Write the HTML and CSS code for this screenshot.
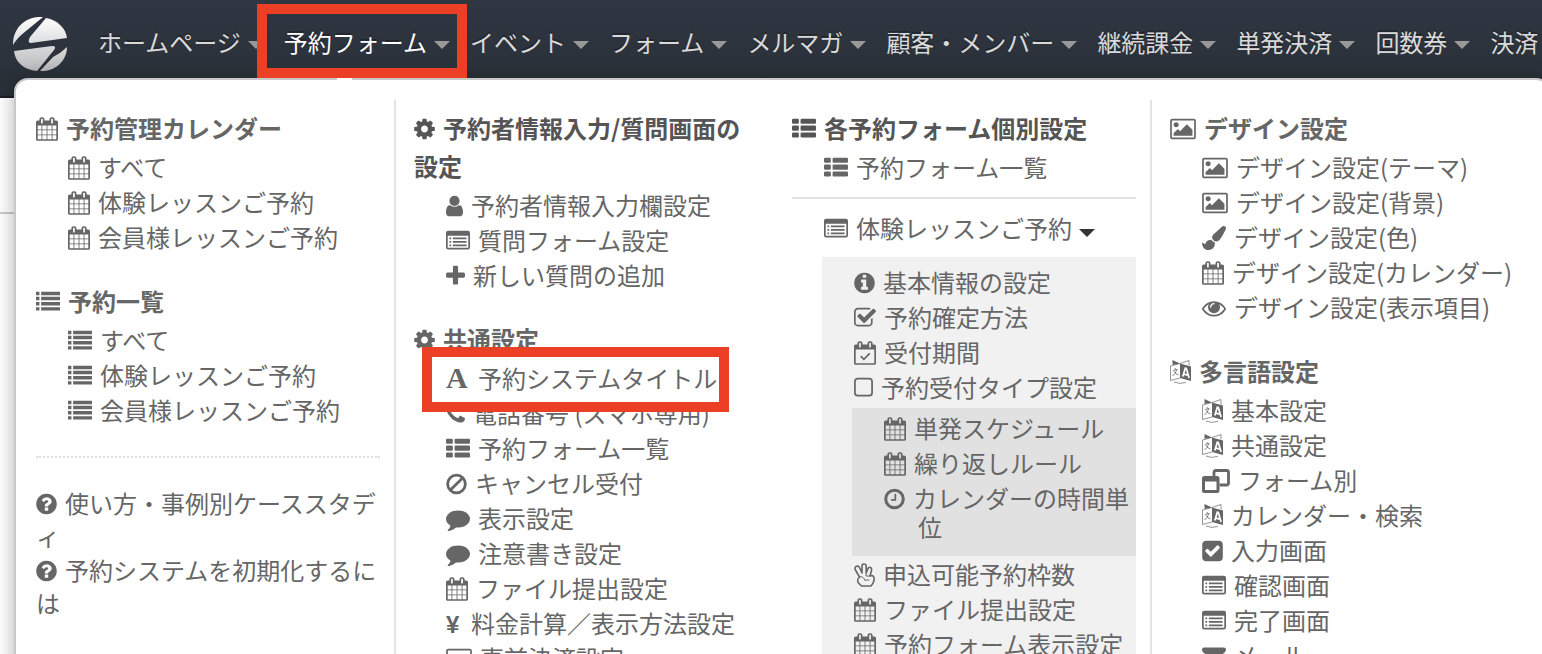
FILE: index.html
```html
<!DOCTYPE html>
<html lang="ja">
<head>
    <meta charset="UTF-8">
    <meta name="viewport" content="width=device-width, initial-scale=1.0">
    <title>予約フォーム</title>
    <link rel="stylesheet" href="styles.css">
</head>
<body>
    <svg class="sprite" aria-hidden="true">
        <symbol id="calendar" viewBox="64 0 1664 1792"><path d="M192 1664h288v-288h-288v288zm352 0h320v-288h-320v288zm-352-352h288v-320h-288v320zm352 0h320v-320h-320v320zm-352-384h288v-288h-288v288zm736 736h320v-288h-320v288zm-384-736h320v-288h-320v288zm768 736h288v-288h-288v288zm-384-352h320v-320h-320v320zm-352-864v-288q0-13-9.5-22.5t-22.5-9.5h-64q-13 0-22.5 9.5t-9.5 22.5v288q0 13 9.5 22.5t22.5 9.5h64q13 0 22.5-9.5t9.5-22.5zm736 864h288v-320h-288v320zm-384-384h320v-288h-320v288zm384 0h288v-288h-288v288zm32-480v-288q0-13-9.5-22.5t-22.5-9.5h-64q-13 0-22.5 9.5t-9.5 22.5v288q0 13 9.5 22.5t22.5 9.5h64q13 0 22.5-9.5t9.5-22.5zm384-64v1280q0 52-38 90t-90 38h-1408q-52 0-90-38t-38-90v-1280q0-52 38-90t90-38h128v-96q0-66 47-113t113-47h64q66 0 113 47t47 113v96h384v-96q0-66 47-113t113-47h64q66 0 113 47t47 113v96h128q52 0 90 38t38 90z"/></symbol>
        <symbol id="calendar-check" viewBox="64 0 1664 1792"><path d="M192 1664h1408v-1024h-1408v1024zm384-1216v-288q0-32-32-32h-64q-32 0-32 32v288q0 32 32 32h64q32 0 32-32zm768 0v-288q0-32-32-32h-64q-32 0-32 32v288q0 32 32 32h64q32 0 32-32zm384-64v1280q0 52-38 90t-90 38h-1408q-52 0-90-38t-38-90v-1280q0-52 38-90t90-38h128v-96q0-66 47-113t113-47h64q66 0 113 47t47 113v96h384v-96q0-66 47-113t113-47h64q66 0 113 47t47 113v96h128q52 0 90 38t38 90z"/><path d="M570 1130l240 240 440-440" fill="none" stroke="currentColor" stroke-width="128"/></symbol>
        <symbol id="list" viewBox="0 0 1792 1792"><path d="M0 128h256v256H0zM384 128h1408v256H384zM0 512h256v256H0zM384 512h1408v256H384zM0 896h256v256H0zM384 896h1408v256H384zM0 1280h256v256H0zM384 1280h1408v256H384z"/></symbol>
        <symbol id="th-list" viewBox="0 0 1792 1792"><rect y="128" width="512" height="384" rx="96"/><rect x="640" y="128" width="1152" height="384" rx="96"/><rect y="640" width="512" height="384" rx="96"/><rect x="640" y="640" width="1152" height="384" rx="96"/><rect y="1152" width="512" height="384" rx="96"/><rect x="640" y="1152" width="1152" height="384" rx="96"/></symbol>
        <symbol id="list-alt" viewBox="0 0 1792 1792"><path fill-rule="evenodd" d="M160 128h1472q160 0 160 160v1088q0 160-160 160h-1472q-160 0-160-160v-1088q0-160 160-160zM128 512v864q0 32 32 32h1472q32 0 32-32v-864z"/><path d="M256 640h128v128H256zM512 640h1024v128H512zM256 896h128v128H256zM512 896h1024v128H512zM256 1152h128v128H256zM512 1152h1024v128H512z"/></symbol>
        <symbol id="question" viewBox="128 0 1536 1792"><path d="M1024 1376v-192q0-14-9-23t-23-9h-192q-14 0-23 9t-9 23v192q0 14 9 23t23 9h192q14 0 23-9t9-23zm256-672q0-88-55.5-163t-138.5-116-170-41q-243 0-371 213-15 24 8 42l132 100q7 6 19 6 16 0 25-12 53-68 86-92 34-24 86-24 48 0 85.5 26t37.5 59q0 38-20 61t-68 45q-63 28-115.5 86.5t-52.5 125.5v36q0 14 9 23t23 9h192q14 0 23-9t9-23q0-19 21.5-49.5t54.5-49.5q32-18 49-28.5t46-35 44.5-48 28-60.5 12.5-81zm384 192q0 209-103 385.5t-279.5 279.5-385.5 103-385.5-103-279.5-279.5-103-385.5 103-385.5 279.5-279.5 385.5-103 385.5 103 279.5 279.5 103 385.5z"/></symbol>
        <symbol id="info" viewBox="128 0 1536 1792"><path d="M1152 1376v-160q0-14-9-23t-23-9h-96v-512q0-14-9-23t-23-9h-320q-14 0-23 9t-9 23v160q0 14 9 23t23 9h96v320h-96q-14 0-23 9t-9 23v160q0 14 9 23t23 9h448q14 0 23-9t9-23zm-128-896v-160q0-14-9-23t-23-9h-192q-14 0-23 9t-9 23v160q0 14 9 23t23 9h192q14 0 23-9t9-23zm640 416q0 209-103 385.5t-279.5 279.5-385.5 103-385.5-103-279.5-279.5-103-385.5 103-385.5 279.5-279.5 385.5-103 385.5 103 279.5 279.5 103 385.5z"/></symbol>
        <symbol id="cog" viewBox="128 0 1536 1792"><path d="M1152 896q0-106-75-181t-181-75-181 75-75 181 75 181 181 75 181-75 75-181zm512-109v222q0 12-8 23t-20 13l-185 28q-19 54-39 91 35 50 107 138 10 12 10 25t-9 23q-27 37-99 108t-94 71q-12 0-26-9l-138-108q-44 23-91 38-16 136-29 186-7 28-36 28h-222q-14 0-24.5-8.5t-11.5-21.5l-28-184q-49-16-90-37l-141 107q-10 9-25 9-14 0-25-11-126-114-165-168-7-10-7-23 0-12 8-23 15-21 51-66.5t54-70.5q-27-50-41-99l-183-27q-13-2-21-12.5t-8-23.5v-222q0-12 8-23t19-13l186-28q14-46 39-92-40-57-107-138-10-12-10-24 0-10 9-23 26-36 98.5-107.5t94.5-71.5q13 0 26 10l138 107q44-23 91-38 16-136 29-186 7-28 36-28h222q14 0 24.5 8.5t11.5 21.5l28 184q49 16 90 37l142-107q9-9 24-9 13 0 25 10 129 119 165 170 7 8 7 22 0 12-8 23-15 21-51 66.5t-54 70.5q26 50 41 98l183 28q13 2 21 12.5t8 23.5z"/></symbol>
        <symbol id="user" viewBox="256 0 1280 1792"><path d="M1536 1399q0 109-62.5 187t-150.5 78h-854q-88 0-150.5-78t-62.5-187q0-85 8.5-160.5t31.5-152 58.5-131 94-89 134.5-34.5q131 128 313 128t313-128q76 0 134.5 34.5t94 89 58.5 131 31.5 152 8.5 160.5zm-256-887q0 159-112.5 271.5t-271.5 112.5-271.5-112.5-112.5-271.5 112.5-271.5 271.5-112.5 271.5 112.5 112.5 271.5z"/></symbol>
        <symbol id="plus" viewBox="192 0 1408 1792"><path d="M1600 736v192q0 40-28 68t-68 28h-416v416q0 40-28 68t-68 28h-192q-40 0-68-28t-28-68v-416h-416q-40 0-68-28t-28-68v-192q0-40 28-68t68-28h416v-416q0-40 28-68t68-28h192q40 0 68 28t28 68v416h416q40 0 68 28t28 68z"/></symbol>
        <symbol id="phone" viewBox="192 0 1408 1792"><path d="M1600 1240q0 27-10 70.5t-21 68.5q-21 50-122 106-94 51-186 51-27 0-52.5-3.5t-57.5-12.5-47.5-14.5-55.5-20.5-49-18q-98-35-175-83-128-79-264.5-215.5t-215.5-264.5q-48-77-83-175-3-9-18-49t-20.5-55.5-14.5-47.5-12.5-57.5-3.5-52.5q0-92 51-186 56-101 106-122 25-11 68.5-21t70.5-10q14 0 21 3 18 6 53 76 11 19 30 54t35 63.5 31 53.5q3 4 17.5 25t21.5 35.5 7 28.5q0 20-28.5 50t-62 55-62 53-28.5 46q0 9 5 22.5t8.5 20.5 14 24 11.5 19q76 137 174 235t235 174q2 1 19 11.5t24 14 20.5 8.5 22.5 5q18 0 46-28.5t53-62 55-62 50-28.5q14 0 28.5 7t35.5 21.5 25 17.5q25 15 53.5 31t63.5 35 54 30q70 35 76 53 3 7 3 21z"/></symbol>
        <symbol id="ban" viewBox="128 0 1536 1792"><g fill="none" stroke="currentColor" stroke-width="210"><circle cx="896" cy="896" r="660"/><path d="M440 1352l912-912"/></g></symbol>
        <symbol id="comment" viewBox="0 0 1792 1792"><path d="M1792 896q0 174-120 321.5t-326 233-450 85.5q-70 0-145-8-198 175-460 242-49 14-114 22-17 2-30.5-9t-17.5-29v-1q-3-4-.5-12t2-10 4.5-9.5l6-9 7-8.5 8-9q7-8 31-34.5t34.5-38 31-39.5 32.5-51 27-59 26-76q-157-89-247.5-220t-90.5-281q0-130 71-248.5t191-204.5 286-136.5 348-50.5q244 0 450 85.5t326 233 120 321.5z"/></symbol>
        <symbol id="card" viewBox="0 0 1920 1792"><path fill-rule="evenodd" d="M160 128h1600q160 0 160 160v1216q0 160-160 160h-1600q-160 0-160-160v-1216q0-160 160-160zM128 256v384h1664v-384zM128 896v640h1664v-640z"/></symbol>
        <symbol id="check-square-o" viewBox="64 0 1664 1792"><path d="M1472 930v318q0 119-84.5 203.5t-203.5 84.5h-832q-119 0-203.5-84.5t-84.5-203.5v-832q0-119 84.5-203.5t203.5-84.5h832q63 0 117 25 15 7 18 23 3 17-9 29l-49 49q-10 10-23 10-3 0-9-2-23-6-45-6h-832q-66 0-113 47t-47 113v832q0 66 47 113t113 47h832q66 0 113-47t47-113v-254q0-13 9-22l64-64q10-10 23-10 6 0 12 3 20 8 20 29zm231-489l-814 814q-24 24-57 24t-57-24l-430-430q-24-24-24-57t24-57l110-110q24-24 57-24t57 24l263 263 647-647q24-24 57-24t57 24l110 110q24 24 24 57t-24 57z"/></symbol>
        <symbol id="check-square" viewBox="128 0 1536 1792"><path d="M813 1299l614-614q19-19 19-45t-19-45l-102-102q-19-19-45-19t-45 19l-467 467-211-211q-19-19-45-19t-45 19l-102 102q-19 19-19 45t19 45l358 358q19 19 45 19t45-19zm851-883v960q0 119-84.5 203.5t-203.5 84.5h-960q-119 0-203.5-84.5t-84.5-203.5v-960q0-119 84.5-203.5t203.5-84.5h960q119 0 203.5 84.5t84.5 203.5z"/></symbol>
        <symbol id="square-o" viewBox="192 0 1408 1792"><rect x="256" y="192" width="1280" height="1280" rx="224" fill="none" stroke="currentColor" stroke-width="128"/></symbol>
        <symbol id="clock" viewBox="128 0 1536 1792"><circle cx="896" cy="896" r="656" fill="none" stroke="currentColor" stroke-width="224"/><path d="M1024 544v448q0 14-9 23t-23 9h-320q-14 0-23-9t-9-23v-64q0-14 9-23t23-9h224v-352q0-14 9-23t23-9h64q14 0 23 9t9 23z"/></symbol>
        <symbol id="peace" viewBox="0 0 21 24"><g fill="none" stroke="currentColor" stroke-width="1.6" stroke-linejoin="round" stroke-linecap="round"><path d="M5.500 14L1.200 6.500Q.5 4 2.500 3.300T5.500 4.500L8 10V3Q8 1 10 1t2.200 2v7L14 5.500Q15 3.700 16.500 4.500t1 3L16 13q3-1 3.800 1t-.3 5q-.5 2-2.500 4H7.500L4 19.500q-1-3.500 1.500-5.500z"/><path d="M5.500 14q2-1 3.500.5t2 3q2-1 4-.5M12 10v3l4 0" stroke-width="1"/></g></symbol>
        <symbol id="image" viewBox="-64 0 1920 1792"><path d="M576 576q0 80-56 136t-136 56-136-56-56-136 56-136 136-56 136 56 56 136zm1024 384v448h-1408v-192l320-320 160 160 512-512zm96-704h-1600q-13 0-22.5 9.5t-9.5 22.5v1216q0 13 9.5 22.5t22.5 9.5h1600q13 0 22.5-9.5t9.5-22.5v-1216q0-13-9.5-22.5t-22.5-9.5zm160 32v1216q0 66-47 113t-113 47h-1600q-66 0-113-47t-47-113v-1216q0-66 47-113t113-47h1600q66 0 113 47t47 113z"/></symbol>
        <symbol id="brush" viewBox="0 0 1792 1792"><path d="M1615 0q70 0 122.5 46.5t52.5 116.5q0 63-45 151-332 629-465 752-97 91-218 91-126 0-216.5-92.5t-90.5-219.5q0-128 92-212l638-579q59-54 130-54zm-909 1034q39 76 106.5 130t150.500 76l1 71q4 213-129.5 347t-348.5 134q-123 0-218-46.5t-152.5-127.5-86.5-183-29-220q7 5 41 30t62 44.5 59 36.5 46 17q41 0 55-37 25-66 57.5-112.5t69.5-76 88-47.5 103-25.5 125-10.5z"/></symbol>
        <symbol id="eye" viewBox="0 0 1792 1792"><path d="M1664 960q-152-236-381-353 61 104 61 225 0 185-131.5 316.5t-316.5 131.5-316.5-131.5-131.5-316.5q0-121 61-225-229 117-381 353 133 205 333.5 326.5t434.5 121.5 434.5-121.5 333.5-326.5zm-720-384q0-20-14-34t-34-14q-125 0-214.5 89.5t-89.5 214.5q0 20 14 34t34 14 34-14 14-34q0-86 61-147t147-61q20 0 34-14t14-34zm848 384q0 34-20 69-140 230-376.5 368.5t-499.5 138.5-499.5-139-376.5-368q-20-35-20-69t20-69q140-229 376.5-368t499.5-139 499.5 139 376.5 368q20 35 20 69z"/></symbol>
        <symbol id="language" viewBox="0 0 21 24"><path d="M10 3.500l11 3V21l-11-3z"/><path d="M10 3.500L.5 6v14.500L10 18M10 3.500L19 .5v5M4 22q5 2.500 12 .5" fill="none" stroke="currentColor" stroke-width=".7"/><path d="M2.500 0v5L10 3.500z"/><path d="M3 10.500l4.500-1.200M5 8l.5 1.500M6.700 9.800Q5.500 14 2.500 16M4 11.500q2 3 4.500 3.500" fill="none" stroke="currentColor" stroke-width=".8"/><path d="M12.800 16.500l2.500-8.300 1 .2 2.800 9.700M13.500 14.200l4.600 1" fill="none" stroke="#fff" stroke-width="1.700"/></symbol>
        <symbol id="restore" viewBox="0 0 28 24"><path fill-rule="evenodd" d="M2.500 7H15q2.500 0 2.500 2.500v12Q17.500 24 15 24H2.500Q0 24 0 21.500v-12Q0 7 2.500 7zM3 12.500V21h11.500v-8.500z"/><path d="M12 7V3.500Q12 1.500 14 1.500h10.500q2 0 2 2v10.500q0 2-2 2H17.500" fill="none" stroke="currentColor" stroke-width="2.800"/></symbol>
        <symbol id="envelope" viewBox="0 0 1792 1792"><path d="M1792 710v794q0 66-47 113t-113 47h-1472q-66 0-113-47t-47-113v-794q44 49 101 87 362 246 497 345 57 42 92.5 65.5t94.5 48 110 24.5h2q51 0 110-24.5t94.5-48 92.5-65.5q170-123 498-345 57-39 100-87zm0-294q0 79-49 151t-122 123q-376 261-468 325-10 7-42.5 31t-54 38.5-52 32.5-57.5 27-50 9h-2q-23 0-50-9t-57.5-27-52-32.5-54-38.5-42.5-31q-91-64-262-182.5t-205-142.5q-62-42-117-115.5t-55-136.5q0-78 41.5-130t118.5-52h1472q65 0 112.5 47t47.5 113z"/></symbol>
    </svg>

    <header>
        <a href="#" class="logo" aria-label="ホーム">
            <svg viewBox="0 0 54 54">
                <defs>
                    <linearGradient id="silver" x1="0" y1="0" x2="0" y2="54" gradientUnits="userSpaceOnUse">
                        <stop offset="0" stop-color="#fff"/>
                        <stop offset="1" stop-color="#b8b9bc"/>
                    </linearGradient>
                </defs>
                <g fill="url(#silver)">
                    <path d="M0 28C0 10 13-1 30 0L13 14Q4 21 0 28z"/>
                    <path d="M33 1C45 3 53 12 54 21L18 26Q14 26 17 20z"/>
                    <path d="M1 34L39 29Q44 29 41 33L24 54C11 53 2 45 1 34z"/>
                    <path d="M54 30C54 44 42 55 27 54L40 40Q48 36 54 30z"/>
                </g>
            </svg>
        </a>
        <nav>
            <a href="#">ホームページ</a>
            <a href="#" class="active">予約フォーム</a>
            <a href="#">イベント</a>
            <a href="#">フォーム</a>
            <a href="#">メルマガ</a>
            <a href="#">顧客・メンバー</a>
            <a href="#">継続課金</a>
            <a href="#">単発決済</a>
            <a href="#">回数券</a>
            <a href="#">決済</a>
        </nav>
    </header>
    <main></main>

    <div class="menu">
        <div class="column line">
            <h3><a href="#"><svg class="icon w22"><use href="#calendar"/></svg>予約管理カレンダー</a></h3>
            <ul>
                <li><a href="#"><svg class="icon w22"><use href="#calendar"/></svg>すべて</a></li>
                <li><a href="#"><svg class="icon w22"><use href="#calendar"/></svg>体験レッスンご予約</a></li>
                <li><a href="#"><svg class="icon w22"><use href="#calendar"/></svg>会員様レッスンご予約</a></li>
            </ul>
            <h3><a href="#"><svg class="icon"><use href="#list"/></svg>予約一覧</a></h3>
            <ul>
                <li><a href="#"><svg class="icon"><use href="#list"/></svg>すべて</a></li>
                <li><a href="#"><svg class="icon"><use href="#list"/></svg>体験レッスンご予約</a></li>
                <li><a href="#"><svg class="icon"><use href="#list"/></svg>会員様レッスンご予約</a></li>
            </ul>
            <div class="help">
                <p><a href="#"><svg class="icon w21"><use href="#question"/></svg>使い方・事例別ケーススタディ</a></p>
                <p><a href="#"><svg class="icon w21"><use href="#question"/></svg>予約システムを初期化するには</a></p>
            </div>
        </div>

        <div class="column">
            <h3><svg class="icon w21"><use href="#cog"/></svg>予約者情報入力/質問画面の設定</h3>
            <ul>
                <li><a href="#"><svg class="icon w17"><use href="#user"/></svg>予約者情報入力欄設定</a></li>
                <li><a href="#"><svg class="icon"><use href="#list-alt"/></svg>質問フォーム設定</a></li>
                <li><a href="#"><svg class="icon w19"><use href="#plus"/></svg>新しい質問の追加</a></li>
            </ul>
            <h3><a href="#"><svg class="icon w21"><use href="#cog"/></svg>共通設定</a></h3>
            <ul>
                <li><a href="#" class="marked"><span class="letter" aria-hidden="true">A</span>予約システムタイトル</a></li>
                <li><a href="#"><svg class="icon w19"><use href="#phone"/></svg>電話番号 (スマホ専用)</a></li>
                <li><a href="#"><svg class="icon"><use href="#th-list"/></svg>予約フォーム一覧</a></li>
                <li><a href="#"><svg class="icon w21"><use href="#ban"/></svg>キャンセル受付</a></li>
                <li><a href="#"><svg class="icon"><use href="#comment"/></svg>表示設定</a></li>
                <li><a href="#"><svg class="icon"><use href="#comment"/></svg>注意書き設定</a></li>
                <li><a href="#"><svg class="icon w22"><use href="#calendar"/></svg>ファイル提出設定</a></li>
                <li><a href="#"><span class="yen" aria-hidden="true">¥</span>料金計算／表示方法設定</a></li>
                <li><a href="#"><svg class="icon w26"><use href="#card"/></svg>事前決済設定</a></li>
            </ul>
        </div>

        <div class="column line">
            <h3><svg class="icon"><use href="#th-list"/></svg>各予約フォーム個別設定</h3>
            <ul>
                <li><a href="#"><svg class="icon"><use href="#th-list"/></svg>予約フォーム一覧</a></li>
            </ul>
            <hr>
            <ul>
                <li><a href="#"><svg class="icon"><use href="#list-alt"/></svg>体験レッスンご予約<span class="caret"></span></a></li>
            </ul>
            <ul class="sub">
                <li><a href="#"><svg class="icon w21"><use href="#info"/></svg>基本情報の設定</a></li>
                <li><a href="#"><svg class="icon w22"><use href="#check-square-o"/></svg>予約確定方法</a></li>
                <li><a href="#"><svg class="icon w22"><use href="#calendar-check"/></svg>受付期間</a></li>
                <li><a href="#"><svg class="icon w19"><use href="#square-o"/></svg>予約受付タイプ設定</a></li>
                <li class="nested">
                    <ul class="subsub">
                        <li><a href="#"><svg class="icon w22"><use href="#calendar"/></svg>単発スケジュール</a></li>
                        <li><a href="#"><svg class="icon w22"><use href="#calendar"/></svg>繰り返しルール</a></li>
                        <li><a href="#"><svg class="icon w21"><use href="#clock"/></svg>カレンダーの時間単位</a></li>
                    </ul>
                </li>
                <li><a href="#"><svg class="icon w21"><use href="#peace"/></svg>申込可能予約枠数</a></li>
                <li><a href="#"><svg class="icon w22"><use href="#calendar"/></svg>ファイル提出設定</a></li>
                <li><a href="#"><svg class="icon w22"><use href="#calendar"/></svg>予約フォーム表示設定</a></li>
            </ul>
        </div>

        <div class="column">
            <h3><a href="#"><svg class="icon w26"><use href="#image"/></svg>デザイン設定</a></h3>
            <ul>
                <li><a href="#"><svg class="icon w26"><use href="#image"/></svg>デザイン設定(テーマ)</a></li>
                <li><a href="#"><svg class="icon w26"><use href="#image"/></svg>デザイン設定(背景)</a></li>
                <li><a href="#"><svg class="icon"><use href="#brush"/></svg>デザイン設定(色)</a></li>
                <li><a href="#"><svg class="icon w22"><use href="#calendar"/></svg>デザイン設定(カレンダー)</a></li>
                <li><a href="#"><svg class="icon"><use href="#eye"/></svg>デザイン設定(表示項目)</a></li>
            </ul>
            <h3><a href="#"><svg class="icon w21"><use href="#language"/></svg>多言語設定</a></h3>
            <ul>
                <li><a href="#"><svg class="icon w21"><use href="#language"/></svg>基本設定</a></li>
                <li><a href="#"><svg class="icon w21"><use href="#language"/></svg>共通設定</a></li>
                <li><a href="#"><svg class="icon w28"><use href="#restore"/></svg>フォーム別</a></li>
                <li><a href="#"><svg class="icon w21"><use href="#language"/></svg>カレンダー・検索</a></li>
                <li><a href="#"><svg class="icon w21"><use href="#check-square"/></svg>入力画面</a></li>
                <li><a href="#"><svg class="icon"><use href="#list-alt"/></svg>確認画面</a></li>
                <li><a href="#"><svg class="icon"><use href="#list-alt"/></svg>完了画面</a></li>
                <li><a href="#"><svg class="icon"><use href="#envelope"/></svg>メール</a></li>
            </ul>
        </div>
    </div>
</body>
</html>
```

FILE: styles.css
```css
* {
    box-sizing: border-box;
}
body {
    margin: 0;
    height: 100vh;
    overflow: hidden;
    position: relative;
    background: #fff;
    color: #555;
    font-family: "Noto Sans CJK JP", sans-serif;
    font-size: 24px;
}
a {
    color: #666;
    text-decoration: none;
}
ul {
    list-style: none;
    margin: 0;
    padding: 0;
}
.sprite {
    display: none;
}

/* top bar */
header {
    display: flex;
    height: 98px;
    padding-left: 13px;
    background: linear-gradient(#303642, #293037);
    border-bottom: 2px solid #1c2025;
}
.logo {
    flex: none;
    width: 54px;
    margin-right: 31px;
    padding-top: 17px;
}
.logo svg {
    display: block;
    width: 54px;
    height: 54px;
}
nav {
    display: flex;
    white-space: nowrap;
}
nav a {
    position: relative;
    display: flex;
    align-items: center;
    height: 82px;
    margin-right: 20px;
    color: #d9d9d9;
    text-shadow: 0 -2px 0 rgba(0, 0, 0, 0.25);
}
nav a::after {
    content: "";
    margin-top: 8px;
    margin-left: 7px;
    border: 8px solid transparent;
    border-top-color: #999;
    border-bottom: 0;
}
nav .active {
    color: #fff;
}
nav .active::before {
    content: "";
    position: absolute;
    z-index: 2;
    top: 4px;
    bottom: 4px;
    left: -27px;
    right: -17px;
    border: 10px solid #eb4025;
}
main {
    height: 116px;
    border-bottom: 2px solid #ccc;
}

/* dropdown */
.menu {
    position: absolute;
    top: 78px;
    left: 14px;
    right: -8px;
    display: grid;
    grid-template-columns: repeat(4, 1fr);
    padding: 20px 18px 20px 2px;
    background: #fff;
    border: 2px solid #c8c8c8;
    border-radius: 14px;
    box-shadow: 0 2px 20px rgba(0, 0, 0, 0.3);
}
.menu::before {
    content: "";
    position: absolute;
    top: -2px;
    left: 321px;
    width: 15px;
    height: 2px;
    background: #fff;
}
.column {
    padding: 9px 14px 0 18px;
    border-right: 2px solid transparent;
}
.line {
    border-right-color: #e3e3e3;
}
h3 {
    margin: 0 0 2px;
    font-size: 24px;
    line-height: 38px;
}
.column ul + h3 {
    margin-top: 28px;
}
li {
    margin-left: 32px;
    padding: 3px 0;
    line-height: 29px;
}
.icon {
    width: 24px;
    height: 24px;
    margin-right: 8px;
    vertical-align: -3px;
    fill: currentColor;
}
.w17 { width: 17px; }
.w19 { width: 19px; }
.w21 { width: 21px; }
.w22 { width: 22px; }
.w26 { width: 26px; }
.w28 { width: 28px; }
.letter,
.yen {
    display: inline-block;
    margin-right: 8px;
    font-weight: bold;
    line-height: 24px;
}
.letter {
    width: 24px;
    font-family: "Liberation Serif", serif;
    font-size: 30px;
}
.yen {
    width: 17px;
    font-family: "Liberation Sans", sans-serif;
}
.help {
    margin-top: 29px;
    padding-top: 28px;
    border-top: 2px dotted #ddd;
}
.help p {
    margin: 0 0 1px;
    line-height: 33px;
}

/* outline round the title item */
.marked {
    position: relative;
    display: inline-block;
}
.marked::after {
    content: "";
    position: absolute;
    top: -16px;
    bottom: -20px;
    left: -24px;
    right: -12px;
    border: 10px solid #eb4025;
}

/* per-form settings */
hr {
    margin: 13px 0 11px;
    border: 0;
    border-top: 2px solid #e3e3e3;
}
.caret {
    display: inline-block;
    margin-left: 7px;
    vertical-align: 1px;
    border: 8px solid transparent;
    border-top-color: #333;
    border-bottom: 0;
}
.sub {
    margin: 12px 0 0 30px;
    padding-top: 7px;
    background: #f1f1f1;
}
.sub .nested {
    margin: 4px 0 0 30px;
    padding: 0;
}
.subsub {
    padding: 2px 0 12px;
    background: #e1e1e1;
}
.subsub li {
    padding-left: 34px;
    text-indent: -34px;
}
```
